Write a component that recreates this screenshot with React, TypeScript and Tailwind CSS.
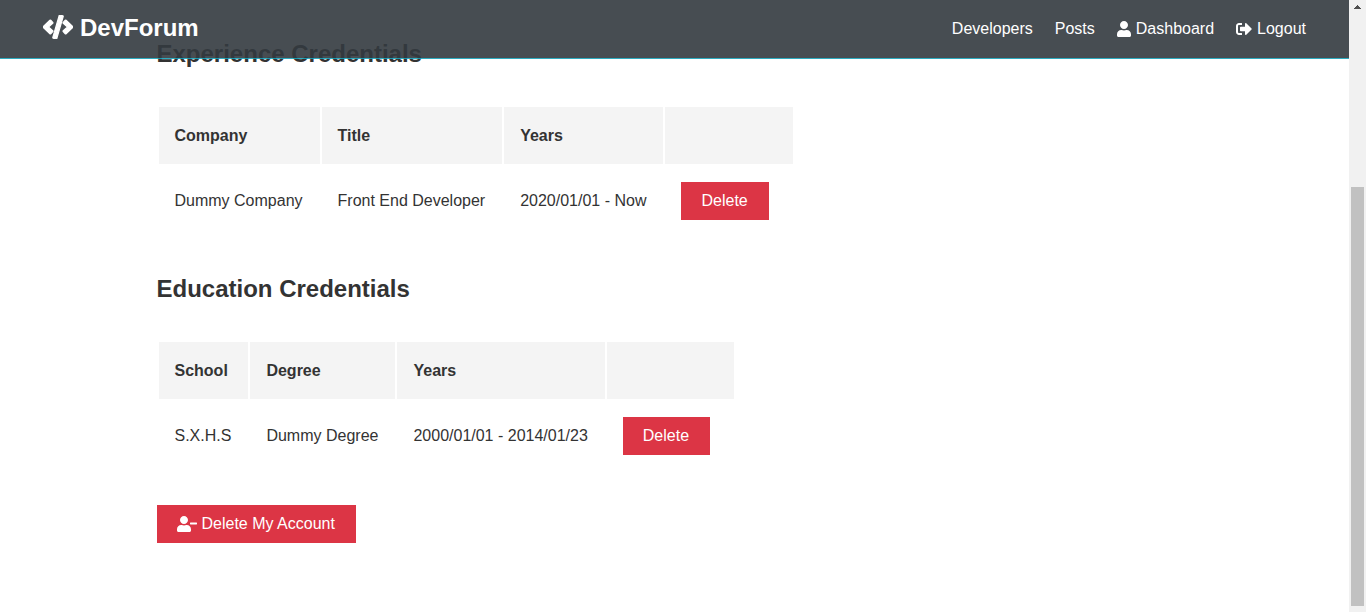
import type { ReactNode } from "react";
import { FaCode, FaSignOutAlt, FaUser, FaUserMinus } from "react-icons/fa";

function NavLink({ icon, children }: { icon?: ReactNode; children: ReactNode }) {
  return (
    <li>
      <a href="#" className="flex items-center gap-[5px] hover:text-[#17a2b8]">
        {icon}
        <span>{children}</span>
      </a>
    </li>
  );
}

function Navbar() {
  return (
    <header className="fixed inset-x-0 top-0 z-10 pr-[17px] opacity-90">
      <nav className="flex items-center justify-between border-b border-[#17a2b8] bg-[#343a40] px-[43px] py-3 text-white">
        <h1 className="text-2xl leading-[32px] font-bold">
          <a href="#" className="flex h-[34px] items-start gap-[7px]">
            <span className="flex h-[30px] items-center">
              <FaCode className="h-6 w-[30px]" stroke="currentColor" strokeWidth="26" aria-hidden="true" />
            </span>
            <span>DevForum</span>
          </a>
        </h1>
        <ul className="flex items-center gap-[22px] leading-[26px]">
          <NavLink>Developers</NavLink>
          <NavLink>Posts</NavLink>
          <NavLink icon={<FaUser className="h-4 w-[14px]" aria-hidden="true" />}>Dashboard</NavLink>
          <NavLink icon={<FaSignOutAlt className="size-4" aria-hidden="true" />}>Logout</NavLink>
        </ul>
      </nav>
    </header>
  );
}

function DangerButton({ children }: { children: ReactNode }) {
  return (
    <button
      type="button"
      className="flex cursor-pointer items-center gap-[5px] bg-[#dc3545] py-[6px] pr-[21px] pl-5 leading-[26px] text-white"
    >
      {children}
    </button>
  );
}

interface CredentialsProps {
  title: string;
  columns: string[];
  rows: string[][];
}

function Credentials({ title, columns, rows }: CredentialsProps) {
  return (
    <section>
      <h2 className="mb-[38px] text-2xl leading-[26px] font-bold">{title}</h2>
      <table className="border-separate border-spacing-[2px]">
        <thead>
          <tr className="leading-[25px]">
            {columns.map((column) => (
              <th key={column} className="bg-[#f4f4f4] p-4 text-left font-bold">
                {column}
              </th>
            ))}
            <th className="bg-[#f4f4f4] p-4" aria-label="Actions" />
          </tr>
        </thead>
        <tbody>
          {rows.map((row) => (
            <tr key={row[0]} className="align-top leading-[38px]">
              {row.map((cell) => (
                <td key={cell} className="py-4 pr-[17px] pl-4 whitespace-nowrap">
                  {cell}
                </td>
              ))}
              <td className="py-4 pr-6 pl-4">
                <DangerButton>Delete</DangerButton>
              </td>
            </tr>
          ))}
        </tbody>
      </table>
    </section>
  );
}

function ScrollTrack() {
  return (
    <div className="fixed inset-y-0 right-0 z-20 flex w-[17px] flex-col items-center bg-[#f1f1f1] pb-[6px]" aria-hidden="true">
      <div className="flex h-[187px] w-full justify-center pt-[5px]">
        <svg width="7" height="4" viewBox="0 0 7 4" fill="#505050">
          <path d="M3 0h1v1h1v1h1v1h1v1H0V3h1V2h1V1h1z" />
        </svg>
      </div>
      <div className="w-[13px] flex-1 bg-[#c1c1c1]" />
    </div>
  );
}

export default function App() {
  return (
    <div className="min-h-screen bg-white pr-[17px] font-['Liberation_Sans',Arial,sans-serif] text-base text-[#333]">
      <Navbar />
      <main className="mx-auto max-w-[1100px] px-8 pt-[41px]">
        <div className="flex flex-col gap-[38px]">
          <Credentials
            title="Experience Credentials"
            columns={["Company", "Title", "Years"]}
            rows={[["Dummy Company", "Front End Developer", "2020/01/01 - Now"]]}
          />
          <Credentials
            title="Education Credentials"
            columns={["School", "Degree", "Years"]}
            rows={[["S.X.H.S", "Dummy Degree", "2000/01/01 - 2014/01/23"]]}
          />
        </div>
        <div className="mt-8 flex">
          <DangerButton>
            <FaUserMinus className="h-4 w-5" aria-hidden="true" />
            <span>Delete My Account</span>
          </DangerButton>
        </div>
      </main>
      <ScrollTrack />
    </div>
  );
}
